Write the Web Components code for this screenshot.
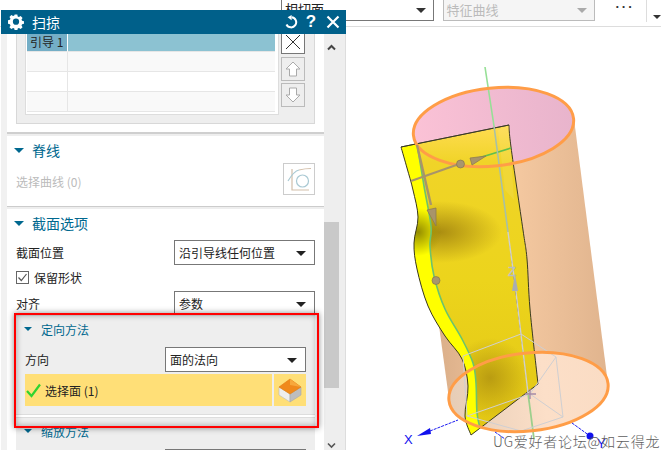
<!DOCTYPE html>
<html>
<head>
<meta charset="utf-8">
<style>
  html, body { margin: 0; background: #fff; }
  body { font: 12px "Noto Sans CJK SC", "Liberation Sans", sans-serif; color: #222; }
</style>
</head>
<body>
<sweep-page></sweep-page>

<script>
// Catmull-Rom through the points, the sheet edges are easier to tune this way
function smooth(pts, start = true) {
  let d = start ? `M${pts[0][0]} ${pts[0][1]}` : `L${pts[0][0]} ${pts[0][1]}`;
  for (let i = 0; i < pts.length - 1; i++) {
    const p0 = pts[i - 1] || pts[i];
    const p1 = pts[i];
    const p2 = pts[i + 1];
    const p3 = pts[i + 2] || p2;
    const c1 = [p1[0] + (p2[0] - p0[0]) / 6, p1[1] + (p2[1] - p0[1]) / 6];
    const c2 = [p2[0] - (p3[0] - p1[0]) / 6, p2[1] - (p3[1] - p1[1]) / 6];
    d += `C${c1[0].toFixed(1)} ${c1[1].toFixed(1)} ${c2[0].toFixed(1)} ${c2[1].toFixed(1)} ${p2[0]} ${p2[1]}`;
  }
  return d;
}

const LEFT_EDGE = [[401,147],[407,168],[413,190],[418,217],[414,243],[417,269],[428,306],[445,336],[462,359],[468,386],[465,416],[471,435]];
const RIGHT_EDGE = [[509,125],[511,147],[523,230],[527,259],[530,309],[538,384]];
const GUIDE = [[417,144],[424,186],[431,226],[430,246],[434,276],[445,309],[462,339],[473,363],[476,383],[477,413],[480,428]];
const sheetPath = smooth(LEFT_EDGE) + "L538 384L509 125Z";
const sheetOutline = smooth(RIGHT_EDGE) + "L471 435" + smooth(LEFT_EDGE.slice().reverse(), false) + "Z";
const stripPath = smooth(LEFT_EDGE) + smooth(GUIDE.slice().reverse(), false) + "Z";

class SweepPage extends HTMLElement {
  constructor() {
    super();
    this.attachShadow({ mode: "open" });
    this.shadowRoot.innerHTML = `
      <style>
        :host { display: block; position: relative; width: 664px; height: 456px; overflow: hidden; background: #fff; }
        .dialog-slot { position: absolute; left: 1px; top: 10px; }
        .callout {
          position: absolute; left: 14px; top: 313px; width: 305px; height: 115px; box-sizing: border-box;
          border: 2px solid #f00;
          box-shadow: 0 0 6px rgba(0,0,0,.45), inset 0 0 6px rgba(0,0,0,.35);
        }
      </style>
      <top-toolbar></top-toolbar>
      <model-scene></model-scene>
      <div class="dialog-slot"><sweep-dialog></sweep-dialog></div>
      <div class="callout"></div>
    `;
  }
}

class TopToolbar extends HTMLElement {
  constructor() {
    super();
    this.attachShadow({ mode: "open" });
    this.shadowRoot.innerHTML = `
      <style>
        :host { display: flex; align-items: flex-start; width: 661px; height: 26px; box-sizing: content-box; padding-left: 0; border-bottom: 1px solid #ddd; }
        .combo { box-sizing: border-box; height: 21px; position: relative; font-size: 13px; line-height: 17px; padding-left: 3px; margin-right: 9px; }
        .first { margin-left: 281px; width: 156px; border: 1px solid #777; border-top: 0; }
        .second { width: 156px; margin-left: 0; border: 1px solid #bbb; border-top: 0; background: #f5f5f5; color: #bbb; padding-top: 1px; }
        .tri { position: absolute; right: 7px; top: 8px; border: 5px solid transparent; border-top: 5px solid #333; border-bottom: 0; }
        .second .tri { border-top-color: #aaa; }
        .dots { width: 43px; text-align: center; font: bold 13px/14px "Liberation Sans", sans-serif; letter-spacing: 2px; color: #333; margin-left: -9px; padding-left: 9px; box-sizing: content-box; }
        .sep { width: 1px; height: 22px; background: #ddd; }
        .more { margin: 15px 0 0 6px; border: 4px solid transparent; border-top: 4px solid #333; border-bottom: 0; }
      </style>
      <div class="combo first">相切面<i class="tri"></i></div>
      <div class="combo second">特征曲线<i class="tri"></i></div>
      <div class="dots">···</div>
      <div class="sep"></div>
      <div class="more"></div>
    `;
  }
}

class ModelScene extends HTMLElement {
  constructor() {
    super();
    this.attachShadow({ mode: "open" });
    this.shadowRoot.innerHTML = `
      <style>
        :host { display: block; position: absolute; left: 0; top: 0; width: 664px; height: 456px; }
        svg { display: block; }
        text { font-family: "Liberation Sans", sans-serif; }
        .mark { font-family: "Noto Sans CJK SC", sans-serif; font-size: 14px; fill: #5e5e5e; letter-spacing: 1.6px; font-weight: 300; }
      </style>
      <svg width="664" height="456" viewBox="0 0 664 456">
        <defs>
          <linearGradient id="side" x1="441" y1="0" x2="608" y2="0" gradientUnits="userSpaceOnUse">
            <stop offset="0" stop-color="#dcb08a"/><stop offset=".45" stop-color="#f4c8a0"/><stop offset="1" stop-color="#e0b48e"/>
          </linearGradient>
          <linearGradient id="pink" x1="413" y1="0" x2="574" y2="0" gradientUnits="userSpaceOnUse">
            <stop offset="0" stop-color="#fbc2d6"/><stop offset="1" stop-color="#e8b4cc"/>
          </linearGradient>
          <linearGradient id="floor" x1="449" y1="0" x2="608" y2="0" gradientUnits="userSpaceOnUse">
            <stop offset="0" stop-color="#e6cdb6"/><stop offset=".6" stop-color="#fcdfc8"/><stop offset="1" stop-color="#fadcc4"/>
          </linearGradient>
          <linearGradient id="sheet" x1="0" y1="125" x2="0" y2="435" gradientUnits="userSpaceOnUse">
            <stop offset="0" stop-color="#ffdc52"/><stop offset=".12" stop-color="#f0d428"/><stop offset=".5" stop-color="#ecd41c"/><stop offset="1" stop-color="#e2c614"/>
          </linearGradient>
          <radialGradient id="blotch1" cx="440" cy="232" r="62" gradientUnits="userSpaceOnUse" gradientTransform="translate(440 232) scale(1 .5) rotate(-12) translate(-440 -232)">
            <stop offset="0" stop-color="#a88a10" stop-opacity=".95"/><stop offset="1" stop-color="#a88a10" stop-opacity="0"/>
          </radialGradient>
          <radialGradient id="blotch2" cx="490" cy="378" r="40" gradientUnits="userSpaceOnUse">
            <stop offset="0" stop-color="#b29410" stop-opacity=".85"/><stop offset="1" stop-color="#b29410" stop-opacity="0"/>
          </radialGradient>
          <radialGradient id="stripdark" cx="418" cy="232" r="24" gradientUnits="userSpaceOnUse">
            <stop offset="0" stop-color="#948c00"/><stop offset="1" stop-color="#948c00" stop-opacity="0"/>
          </radialGradient>
          <clipPath id="sheetclip"><path d="${sheetOutline}"/></clipPath>
        </defs>

        <polygon points="413,135 574,119 608,384 449,399" fill="url(#side)"/>
        <ellipse cx="493.5" cy="127" rx="80.5" ry="39" transform="rotate(-6 493.5 127)" fill="url(#pink)"/>
        <ellipse cx="528.5" cy="392" rx="80" ry="39" transform="rotate(-6 528.5 392)" fill="url(#floor)"/>

        <!-- yellow sheet -->
        <path d="${sheetOutline}" fill="url(#sheet)"/>
        <g clip-path="url(#sheetclip)">
          <rect x="400" y="120" width="145" height="320" fill="url(#blotch1)"/>
          <rect x="400" y="120" width="145" height="320" fill="url(#blotch2)"/>
          <path d="${stripPath}" fill="#ffff00"/>
          <rect x="395" y="205" width="50" height="60" fill="url(#stripdark)"/>
          <path d="M498 130L509 125L514 200L505 190Z" fill="#fff" opacity=".08"/>
        </g>
        <path d="M401 147L509 125" stroke="#555" stroke-width="1" fill="none"/>
        <path d="${sheetOutline}" fill="none" stroke="#3a3a20" stroke-width="1"/>

        <!-- guide and spine -->
        <path d="${smooth(GUIDE)}" fill="none" stroke="#6cc36c" stroke-width="1.6"/>
        <path d="M472 160L511 148" stroke="#62c04a" stroke-width="1.6"/>
        <path d="M485 67L494 126" stroke="#96e096" stroke-width="1.6"/>
        <path d="M494 126L508 232" stroke="#a6c0a8" stroke-width="1.6"/>
        <path d="M508 232L515 284L528 393" stroke="#cfcfcf" stroke-width="1.4"/>
        <path d="M528 393L534 439" stroke="#9ccf8c" stroke-width="1.8"/>

        <!-- csys box -->
        <g fill="none" stroke="#cfcfd2" stroke-width="1">
          <path d="M463 356L521 334L556 357L563 417L530 394L556 357"/>
          <path d="M463 356L467 416L530 394"/>
          <path d="M467 416L521 431L563 417"/>
        </g>
        <path d="M530 389V399M525 394H536" stroke="#a58ca8" stroke-width="1.4"/>

        <!-- orange rims -->
        <ellipse cx="493.5" cy="127" rx="80.5" ry="39" transform="rotate(-6 493.5 127)" fill="none" stroke="#ff9d47" stroke-width="3"/>
        <ellipse cx="528.5" cy="392" rx="80" ry="39" transform="rotate(-6 528.5 392)" fill="none" stroke="#ff9d47" stroke-width="3"/>

        <!-- drag handles -->
        <path d="M411 181L462 163" stroke="#a8946a" stroke-width="2"/>
        <path d="M470 158L486 156L472 165Z" fill="#a8946a" stroke="#8e7b52" stroke-width=".8"/>
        <path d="M417 145L431 205" stroke="#a8946a" stroke-width="2.4"/>
        <path d="M427 210L436 208L436 226Z" fill="#a8946a" stroke="#8e7b52" stroke-width=".8"/>
        <circle cx="460.500" cy="164" r="4" fill="#a8966e" stroke="#7f6f4c" stroke-width=".6"/>
        <circle cx="436" cy="280.500" r="4" fill="#a8966e" stroke="#7f6f4c" stroke-width=".6"/>

        <!-- axes -->
        <text x="508" y="276" font-size="13" fill="#c2c6ca" stroke="#b4b8bc" stroke-width=".3">Z</text>
        <path d="M515 274L518 291L512 291Z" fill="#a9adb2"/>
        <path d="M430 431L458 420M495 432L505 439" stroke="#1b1bf0" stroke-width="1" stroke-dasharray="3 1"/>
        <path d="M417 436L430 428L431 434Z" fill="#1111ee"/>
        <path d="M572 423L590 436" stroke="#1b1bf0" stroke-width="1" stroke-dasharray="3 1"/>
        <circle cx="590" cy="436" r="3.500" fill="#1111ee"/>
        <text x="404" y="444" font-size="13" fill="#1111ee">X</text>
        <text x="597" y="448" font-size="13" fill="#1111ee">Y</text>

        <text class="mark" x="493" y="447" textLength="168" lengthAdjust="spacing">UG爱好者论坛@如云得龙</text>
      </svg>
    `;
  }
}

class SweepDialog extends HTMLElement {
  constructor() {
    super();
    this.attachShadow({ mode: "open" });
    this.shadowRoot.innerHTML = `
      <style>
        :host { display: flex; flex-direction: column; width: 345px; height: 440px; overflow: hidden; }
        .title { flex: none; display: flex; align-items: center; height: 24px; background: #00608a; color: #fff; padding: 0 6px 0 7px; }
        .title .name { font-size: 14px; margin-left: 8px; flex: 1; }
        .title svg { display: block; }
        .help { font: bold 17px/24px "Liberation Sans", sans-serif; width: 12px; margin: 0 9px 0 7px; text-align: center; }
        .body { flex: 1; display: flex; min-height: 0; background: #f1f1f1; padding-left: 6px; border-right: 1px solid #ddd; }
        .content { width: 317px; background: #fff; overflow: hidden; flex: none; }
        .divider { height: 2px; background: #cfcfcf; border-bottom: 2px solid #eee; }
        .pad { padding: 0 9px; }
        .list-section { height: 98px; }
        .list-frame { display: flex; height: 90px; box-sizing: border-box; background: #eee; border: 1px solid #d8d8d8; border-top: 0; padding-left: 8px; }
        .spine { height: 70px; position: relative; }
        .spine-row { display: flex; justify-content: space-between; color: #bbb; margin-top: 1px; height: 32px; line-height: 33px; }
        .curve { width: 32px; height: 32px; margin-right: 0; box-sizing: border-box; border: 1px solid #ccc; margin-top: -2px; }
        .row { display: flex; align-items: center; justify-content: space-between; }
        .row.sel { height: 25px; }
        .gap3 { margin-top: 3px; } .gap7 { margin-top: 6px; }
        .divider.thick { height: 1px; border-bottom: 2px solid #eee; background: #ccc; }
      </style>
      <div class="title">
        <svg width="16" height="16" viewBox="0 0 16 16"><path fill="#fff" fill-rule="evenodd" d="M6.6 1h2.800l.4 2 1.300.6 1.800-1.100 2 2-1.100 1.800.6 1.300 2 .4v2.800l-2 .4-.6 1.300 1.100 1.800-2 2-1.800-1.100-1.300.6-.4 2H6.600l-.4-2-1.300-.6-1.800 1.100-2-2 1.100-1.800-.6-1.300-2-.4V7l2-.4.6-1.300-1.100-1.800 2-2 1.800 1.100 1.300-.6zM8 5.200a3.300 3.300 0 1 0 0 6.600 3.300 3.300 0 0 0 0-6.600z" transform="translate(.4 -.4) scale(.95)"/></svg>
        <span class="name">扫掠</span>
        <svg width="14" height="14" viewBox="0 0 14 14"><path d="M7.600 2.200A5.100 5.100 0 1 1 2.500 9.500" fill="none" stroke="#fff" stroke-width="2"/><path d="M8.600 0L8.600 5.200L4.600 2.200Z" fill="#fff" transform="translate(-1 0)"/></svg>
        <span class="help">?</span>
        <svg width="14" height="14" viewBox="0 0 14 14"><path d="M1.500 1.500L12.500 12.500M12.500 1.500L1.500 12.500" stroke="#fff" stroke-width="2.200"/></svg>
      </div>
      <div class="body">
        <div class="content">
          <div class="list-section pad">
            <div class="list-frame">
              <guide-list></guide-list>
              <list-buttons></list-buttons>
            </div>
          </div>
          <div class="divider"></div>
          <div class="spine">
            <section-head>脊线</section-head>
            <div class="pad spine-row">
              <span>选择曲线 (0)</span>
              <svg class="curve" viewBox="0 0 30 30"><path d="M8 5V26H25" fill="none" stroke="#d3bfaa" stroke-width="1.200"/><path d="M4 17Q10 7 15 6" fill="none" stroke="#a9c9d3" stroke-width="1.200"/><path d="M15 6Q21 4.500 27 4.500" fill="none" stroke="#d3bfaa" stroke-width="1.200"/><circle cx="18.500" cy="17" r="6" fill="none" stroke="#a9c9d3" stroke-width="1.200"/></svg>
            </div>
          </div>
          <div class="divider thick"></div>
          <section-head>截面选项</section-head>
          <div class="pad">
            <div class="row sel gap3"><span>截面位置</span><drop-select>沿引导线任何位置</drop-select></div>
            <check-row class="gap7">保留形状</check-row>
            <div class="row sel" style="margin-top:7px"><span>对齐</span><drop-select>参数</drop-select></div>
            <option-group title-text="定向方法" style="margin-top:-1px">
              <div class="row sel" style="margin-top:5px"><span>方向</span><drop-select>面的法向</drop-select></div>
              <select-bar>选择面 (1)</select-bar>
            </option-group>
            <option-group title-text="缩放方法" style="margin-top:2px">
              <div class="row sel" style="margin-top:5px"><span>方法</span><drop-select>恒定</drop-select></div>
            </option-group>
          </div>
        </div>
        <scroll-rail></scroll-rail>
      </div>
    `;
  }
}

class SectionHead extends HTMLElement {
  constructor() {
    super();
    this.attachShadow({ mode: "open" });
    this.shadowRoot.innerHTML = `
      <style>
        :host { display: flex; align-items: center; height: 28px; padding-left: 7px; font-size: 14px; color: #00688f; }
        i { border: 5px solid transparent; border-top: 5px solid #00688f; border-bottom: 0; margin-right: 8px; }
      </style>
      <i></i><slot></slot>
    `;
  }
}

class DropSelect extends HTMLElement {
  constructor() {
    super();
    this.attachShadow({ mode: "open" });
    this.shadowRoot.innerHTML = `
      <style>
        :host { display: flex; align-items: center; justify-content: space-between; box-sizing: border-box; width: 141px; height: 25px; padding: 0 8px 0 4px; background: #fff; border: 1px solid #777; color: #222; }
        i { border: 5px solid transparent; border-top: 5px solid #222; border-bottom: 0; margin-top: 1px; }
      </style>
      <span><slot></slot></span><i></i>
    `;
  }
}

class CheckRow extends HTMLElement {
  constructor() {
    super();
    this.attachShadow({ mode: "open" });
    this.shadowRoot.innerHTML = `
      <style>
        :host { display: flex; align-items: center; height: 13px; }
        svg { margin-right: 5px; flex: none; }
      </style>
      <svg width="13" height="13" viewBox="0 0 13 13"><rect x=".5" y=".5" width="12" height="12" fill="#fff" stroke="#666"/><path d="M2.500 6.500L5.300 9.500L10.500 3" fill="none" stroke="#555" stroke-width="1.200"/></svg>
      <slot></slot>
    `;
  }
}

class OptionGroup extends HTMLElement {
  constructor() {
    super();
    this.attachShadow({ mode: "open" });
    this.shadowRoot.innerHTML = `
      <style>
        :host { display: block; position: relative; box-sizing: border-box; background: #eee; border-bottom: 1px solid #ddd; border-top: 1px solid #ddd; padding: 0 9px 8px; height: 100px; }
        .head { display: flex; align-items: center; height: 26px; color: #00688f; }
        i { border: 4px solid transparent; border-top: 4px solid #00688f; border-bottom: 0; margin: 0 9px 0 -1px; }
      </style>
      <div class="head"><i></i><span class="t"></span></div>
      <slot></slot>
    `;
  }
  connectedCallback() {
    this.shadowRoot.querySelector(".t").textContent = this.getAttribute("title-text");
  }
}

class SelectBar extends HTMLElement {
  constructor() {
    super();
    this.attachShadow({ mode: "open" });
    this.shadowRoot.innerHTML = `
      <style>
        :host { display: flex; height: 32px; margin-top: 2px; gap: 2px; color: #222; }
        .main { flex: 1; display: flex; align-items: center; background: #ffdf77; padding-left: 1px; }
        .main svg { margin-right: 4px; }
        .cube { width: 32px; background: #ffdf77; }
        .cube svg { display: block; }
      </style>
      <div class="main">
        <svg width="15" height="15" viewBox="0 0 15 15"><path d="M1 8L5.500 13L14 1.500" fill="none" stroke="#2fd42f" stroke-width="2.200"/></svg>
        <span><slot></slot></span>
      </div>
      <div class="cube">
        <svg width="32" height="32" viewBox="0 0 32 32">
          <path d="M5 13L16 20V28L5 21Z" fill="#eee" stroke="#bbb" stroke-width=".6"/>
          <path d="M27 13L16 20V28L27 21Z" fill="#bdbdbd" stroke="#aaa" stroke-width=".6"/>
          <path d="M16 5L27 13L16 20L5 13Z" fill="#f08a1c" stroke="#e07c10" stroke-width=".6"/>
          <path d="M16 5L27 13L16 11Z" fill="#f7a83c"/>
        </svg>
      </div>
    `;
  }
}

class GuideList extends HTMLElement {
  constructor() {
    super();
    this.attachShadow({ mode: "open" });
    this.shadowRoot.innerHTML = `
      <style>
        :host { display: block; box-sizing: border-box; width: 254px; height: 81px; background: #fff; border: 1px solid #ddd; border-top: 0; padding: 0 3px 2px 1px; flex: none; }
        .grid { display: grid; grid-template-columns: 41px 1fr; grid-template-rows: 18px repeat(3, 20px); height: 78px; }
        .grid div { border-bottom: 1px solid #e6e6e6; }
        .grid div:nth-child(odd) { border-right: 1px solid #e6e6e6; }
        .grid .band { background: #f9f9f9; }
        .a { background: #74aec6 !important; padding-left: 3px; line-height: 16px; border-right: 1px solid #fff !important; border-bottom-color: #e8e8e8; }
        .b { background: #8cc2d2; }
      </style>
      <div class="grid">
        <div class="a">引导 1</div><div class="b"></div>
        <div class="band"></div><div class="band"></div>
        <div></div><div></div>
        <div class="band"></div><div class="band"></div>
      </div>
    `;
  }
}

class ListButtons extends HTMLElement {
  constructor() {
    super();
    this.attachShadow({ mode: "open" });
    this.shadowRoot.innerHTML = `
      <style>
        :host { display: flex; flex-direction: column; margin-left: 2px; width: 24px; }
        .b { box-sizing: border-box; width: 24px; height: 24px; border: 1px solid #bbb; margin-bottom: 2px; }
        .x { height: 20px; border-color: #777; background: #fff; border-top: 0; margin-bottom: 3px; }
        svg { display: block; }
      </style>
      <div class="b x"><svg width="22" height="19" viewBox="0 0 22 19"><path d="M4 1L18 15M18 1L4 15" stroke="#333" stroke-width="1"/></svg></div>
      <div class="b"><svg width="22" height="22" viewBox="0 0 22 22"><path d="M11 4L18 11H14.500V18H7.500V11H4Z" fill="#fff" stroke="#aaa"/></svg></div>
      <div class="b"><svg width="22" height="22" viewBox="0 0 22 22"><path d="M11 18L18 11H14.500V4H7.500V11H4Z" fill="#fff" stroke="#aaa"/></svg></div>
    `;
  }
}

class ScrollRail extends HTMLElement {
  constructor() {
    super();
    this.attachShadow({ mode: "open" });
    this.shadowRoot.innerHTML = `
      <style>
        :host { display: block; position: relative; width: 21px; background: #eee; flex: none; }
        .thumb { position: absolute; left: 0; top: 188px; width: 15px; height: 166px; background: #c9c9c9; }
        svg { position: absolute; left: 3px; }
      </style>
      <svg style="top:10px" width="9" height="7" viewBox="0 0 9 7"><path d="M1 5.500L4.500 2L8 5.500" fill="none" stroke="#444" stroke-width="2"/></svg>
      <div class="thumb"></div>
      <svg style="top:408px" width="9" height="7" viewBox="0 0 9 7"><path d="M1 1.500L4.500 5L8 1.500" fill="none" stroke="#555" stroke-width="1.600"/></svg>
    `;
  }
}

customElements.define("sweep-page", SweepPage);
customElements.define("top-toolbar", TopToolbar);
customElements.define("model-scene", ModelScene);
customElements.define("sweep-dialog", SweepDialog);
customElements.define("section-head", SectionHead);
customElements.define("drop-select", DropSelect);
customElements.define("check-row", CheckRow);
customElements.define("option-group", OptionGroup);
customElements.define("select-bar", SelectBar);
customElements.define("guide-list", GuideList);
customElements.define("list-buttons", ListButtons);
customElements.define("scroll-rail", ScrollRail);
</script>
</body>
</html>
